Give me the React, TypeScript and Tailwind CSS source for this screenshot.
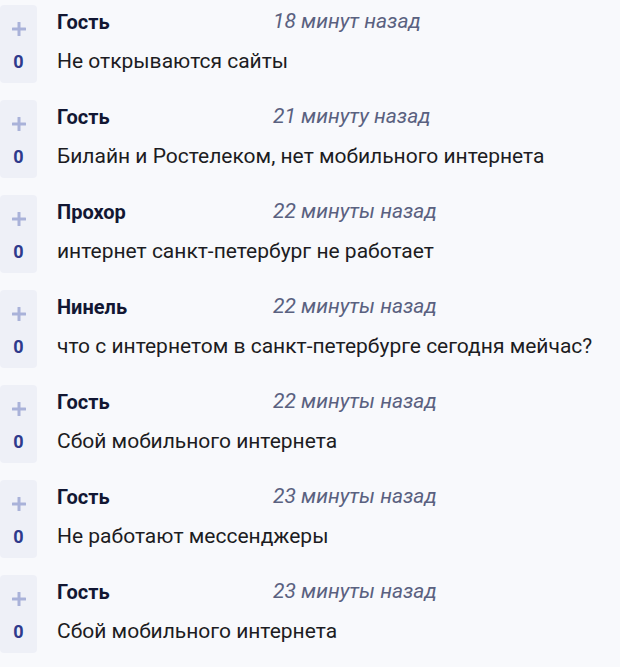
import React from 'react';

type Comment = { name: string; time: string; text: string; votes: number };

const comments: Comment[] = [
  { name: 'Гость', time: '18 минут назад', text: 'Не открываются сайты', votes: 0 },
  { name: 'Гость', time: '21 минуту назад', text: 'Билайн и Ростелеком, нет мобильного интернета', votes: 0 },
  { name: 'Прохор', time: '22 минуты назад', text: 'интернет санкт-петербург не работает', votes: 0 },
  { name: 'Нинель', time: '22 минуты назад', text: 'что с интернетом в санкт-петербурге сегодня мейчас?', votes: 0 },
  { name: 'Гость', time: '22 минуты назад', text: 'Сбой мобильного интернета', votes: 0 },
  { name: 'Гость', time: '23 минуты назад', text: 'Не работают мессенджеры', votes: 0 },
  { name: 'Гость', time: '23 минуты назад', text: 'Сбой мобильного интернета', votes: 0 },
];

const CommentRow: React.FC<{ c: Comment }> = ({ c }) => (
  <div className="flex gap-[20px] mb-[17px]">
    <div className="w-[37px] h-[78px] shrink-0 rounded-[4px] bg-[#eef0f7] flex flex-col items-center pt-[16px]">
      <svg width="16" height="16" viewBox="0 0 16 16" className="text-[#a9b2d9]">
        <rect x="6.5" y="1" width="3" height="14" rx="0.5" fill="currentColor" />
        <rect x="1" y="6.5" width="14" height="3" rx="0.5" fill="currentColor" />
      </svg>
      <span className="mt-[13px] text-[18px] font-bold leading-[24px] text-[#2e3a8c]">{c.votes}</span>
    </div>
    <div className="flex flex-col">
      <div className="flex items-center h-[34px]">
        <span className="w-[216px] text-[20px] font-bold text-[#121733]">{c.name}</span>
        <span className="text-[21px] italic text-[#5a6180]">{c.time}</span>
      </div>
      <div className="mt-[8px] text-[21px] text-[#1c1c22] leading-[28px]">{c.text}</div>
    </div>
  </div>
);

export default function App() {
  return (
    <div
      className="min-h-[667px] w-[620px] bg-[#f8f9fc] pt-[5px] overflow-hidden"
      style={{ fontFamily: 'Roboto, "Liberation Sans", sans-serif' }}
    >
      {comments.map((c, i) => (
        <CommentRow key={i} c={c} />
      ))}
    </div>
  );
}
